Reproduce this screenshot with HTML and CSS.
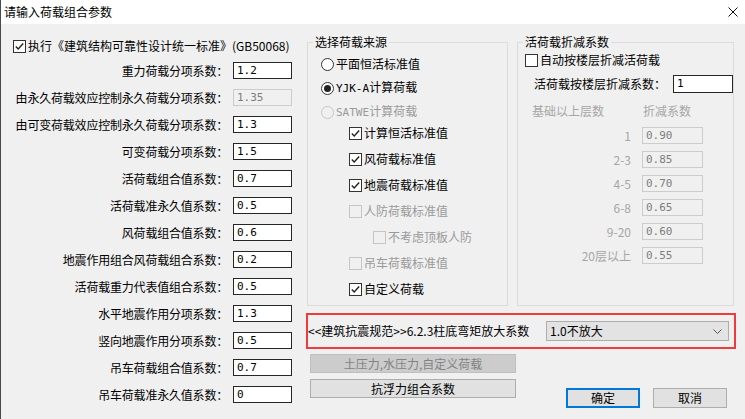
FILE: index.html
```html
<!DOCTYPE html>
<html lang="zh-CN">
<head>
<meta charset="utf-8">
<title>请输入荷载组合参数</title>
<link rel="stylesheet" href="styles.css">
</head>
<body>
<div class="window">
  <div class="titlebar">
    <span class="title">请输入荷载组合参数</span>
    <svg class="close" viewBox="0 0 10 10"><path d="M0.5 0.5 L9.5 9.5 M9.5 0.5 L0.5 9.5" stroke="#111" stroke-width="1" fill="none"/></svg>
  </div>
  <div class="main">
    <div class="left">
      <div class="row topchk">
        <span class="cb"><svg viewBox="0 0 11 11"><path d="M1.8 5.6 L4.2 8 L9.2 2.6" /></svg></span>
        <span>执行《建筑结构可靠性设计统一标准》(GB50068)</span>
      </div>
      <div class="params">
        <span class="lbl">重力荷载分项系数：</span><span class="inp">1.2</span>
        <span class="lbl">由永久荷载效应控制永久荷载分项系数：</span><span class="inp dis">1.35</span>
        <span class="lbl">由可变荷载效应控制永久荷载分项系数：</span><span class="inp">1.3</span>
        <span class="lbl">可变荷载分项系数：</span><span class="inp">1.5</span>
        <span class="lbl">活荷载组合值系数：</span><span class="inp">0.7</span>
        <span class="lbl">活荷载准永久值系数：</span><span class="inp">0.5</span>
        <span class="lbl">风荷载组合值系数：</span><span class="inp">0.6</span>
        <span class="lbl">地震作用组合风荷载组合系数：</span><span class="inp">0.2</span>
        <span class="lbl">活荷载重力代表值组合系数：</span><span class="inp">0.5</span>
        <span class="lbl">水平地震作用分项系数：</span><span class="inp">1.3</span>
        <span class="lbl">竖向地震作用分项系数：</span><span class="inp">0.5</span>
        <span class="lbl">吊车荷载组合值系数：</span><span class="inp">0.7</span>
        <span class="lbl">吊车荷载准永久值系数：</span><span class="inp">0</span>
      </div>
    </div>
    <div class="right">
      <div class="groups">
        <fieldset class="grp grp-src">
          <legend>选择荷载来源</legend>
          <div class="radios">
            <div class="row rrow"><span class="rad"></span><span>平面恒活标准值</span></div>
            <div class="row rrow"><span class="rad on"></span><span><span class="mono">YJK-A</span>计算荷载</span></div>
            <div class="row rrow disabled"><span class="rad"></span><span><span class="mono">SATWE</span>计算荷载</span></div>
          </div>
          <div class="checks">
            <div class="row crow"><span class="cb"><svg viewBox="0 0 11 11"><path d="M1.8 5.6 L4.2 8 L9.2 2.6" /></svg></span><span>计算恒活标准值</span></div>
            <div class="row crow"><span class="cb"><svg viewBox="0 0 11 11"><path d="M1.8 5.6 L4.2 8 L9.2 2.6" /></svg></span><span>风荷载标准值</span></div>
            <div class="row crow"><span class="cb"><svg viewBox="0 0 11 11"><path d="M1.8 5.6 L4.2 8 L9.2 2.6" /></svg></span><span>地震荷载标准值</span></div>
            <div class="row crow disabled"><span class="cb"></span><span>人防荷载标准值</span></div>
            <div class="row crow sub disabled"><span class="cb"></span><span>不考虑顶板人防</span></div>
            <div class="row crow disabled"><span class="cb"></span><span>吊车荷载标准值</span></div>
            <div class="row crow"><span class="cb"><svg viewBox="0 0 11 11"><path d="M1.8 5.6 L4.2 8 L9.2 2.6" /></svg></span><span>自定义荷载</span></div>
          </div>
        </fieldset>
        <fieldset class="grp grp-red">
          <legend>活荷载折减系数</legend>
          <div class="row autochk"><span class="cb"></span><span>自动按楼层折减活荷载</span></div>
          <div class="row floorrow"><span>活荷载按楼层折减系数：</span><span class="inp tall">1</span></div>
          <div class="redtable">
            <span class="th th1">基础以上层数</span><span class="th th2">折减系数</span>
            <span class="rl">1</span><span class="inp dis">0.90</span>
            <span class="rl">2-3</span><span class="inp dis">0.85</span>
            <span class="rl">4-5</span><span class="inp dis">0.70</span>
            <span class="rl">6-8</span><span class="inp dis">0.65</span>
            <span class="rl">9-20</span><span class="inp dis">0.60</span>
            <span class="rl">20层以上</span><span class="inp dis">0.55</span>
          </div>
        </fieldset>
      </div>
      <div class="redbox">
        <span class="rb-text">&lt;&lt;建筑抗震规范&gt;&gt;6.2.3柱底弯矩放大系数</span>
        <div class="select">
          <span>1.0不放大</span>
          <svg class="chev" viewBox="0 0 9 5"><path d="M0.5 0.5 L4.5 4.5 L8.5 0.5" /></svg>
        </div>
      </div>
      <div class="actions">
        <div class="btncol">
          <div class="btn btn-dis">土压力,水压力,自定义荷载</div>
          <div class="btn">抗浮力组合系数</div>
        </div>
        <div class="okcancel">
          <div class="btn btn-ok">确定</div>
          <div class="btn btn-sm">取消</div>
        </div>
      </div>
    </div>
  </div>
</div>
</body>
</html>
```
FILE: styles.css
```css
html, body {
  margin: 0;
  padding: 0;
}
body {
  width: 745px;
  height: 419px;
  overflow: hidden;
  background: #f0f0f0;
  font-family: "Noto Sans CJK SC", "Noto Sans", sans-serif;
  font-size: 12px;
  color: #000;
}
.window {
  height: 419px;
  border-left: 1px solid #4a4a4a;
  display: flex;
  flex-direction: column;
}
.titlebar {
  height: 24px;
  flex: none;
  background: #fff;
  display: flex;
  align-items: center;
  justify-content: space-between;
  padding: 0 7px 0 3px;
}
.title {
  line-height: 16px;
}
.close {
  width: 10px;
  height: 10px;
}
.main {
  flex: 1;
  display: flex;
}
.left {
  width: 305px;
  flex: none;
}
.row {
  display: flex;
  align-items: center;
  gap: 2px;
  white-space: nowrap;
  line-height: 16px;
}
.topchk {
  height: 20px;
  margin: 12px 0 1px 12px;
}
.cb {
  width: 13px;
  height: 13px;
  box-sizing: border-box;
  border: 1px solid #333;
  background: #fff;
  flex: none;
  display: flex;
}
.cb svg {
  width: 11px;
  height: 11px;
  fill: none;
  stroke: #222;
  stroke-width: 1.4;
}
.rad {
  width: 13px;
  height: 13px;
  box-sizing: border-box;
  border: 1px solid #333;
  border-radius: 50%;
  background: #fff;
  flex: none;
  display: flex;
  align-items: center;
  justify-content: center;
}
.rad.on::after {
  content: "";
  width: 7px;
  height: 7px;
  border-radius: 50%;
  background: #222;
}
.disabled {
  color: #9a9a9a;
}
.disabled .cb,
.disabled .rad {
  border-color: #c6c6c6;
  background: #f0f0f0;
}
.mono {
  font-family: "DejaVu Sans Mono", monospace;
  font-size: 11px;
}
.params {
  display: grid;
  grid-template-columns: 227px 59px;
  column-gap: 5px;
  grid-auto-rows: 27px;
  align-items: center;
}
.lbl {
  text-align: right;
  line-height: 16px;
  white-space: nowrap;
  letter-spacing: -0.2px;
}
.inp {
  height: 17px;
  box-sizing: border-box;
  border: 1px solid #262626;
  background: #fff;
  font-family: "DejaVu Sans Mono", monospace;
  font-size: 11px;
  line-height: 15px;
  padding-left: 3px;
  white-space: nowrap;
}
.inp.dis {
  border-color: #cccccc;
  background: #f0f0f0;
  color: #7d7d7d;
}
.inp.tall {
  height: 18px;
  line-height: 16px;
  width: 60px;
  flex: none;
}
.right {
  flex: 1;
  padding-top: 10px;
  display: flex;
  flex-direction: column;
}
.groups {
  display: flex;
}
.grp {
  margin: 0;
  padding: 0;
  border: 1px solid #dcdcdc;
  box-sizing: border-box;
  height: 272px;
  min-width: 0;
}
.grp legend {
  margin-left: 5px;
  padding: 0 2px;
  line-height: 16px;
  font-size: 12px;
}
.grp-src {
  width: 201px;
  margin-left: 1px;
}
.grp-red {
  width: 217px;
  margin-left: 9px;
}
.radios {
  padding: 2px 0 0 13px;
}
.rrow {
  height: 24px;
}
.checks {
  margin-top: -4px;
  padding-left: 41px;
}
.crow {
  height: 26px;
}
.crow.sub {
  padding-left: 24px;
}
.autochk {
  height: 20px;
  padding-left: 7px;
}
.floorrow {
  height: 20px;
  margin-top: 4px;
  padding-left: 16px;
  padding-right: 0;
  justify-content: space-between;
}
.redtable {
  margin-top: 8px;
  display: grid;
  grid-template-columns: 113px 61px;
  column-gap: 11px;
  grid-template-rows: 18px;
  grid-auto-rows: 17px;
  row-gap: 7px;
  align-items: center;
  color: #a6a6a6;
}
.th {
  line-height: 16px;
  white-space: nowrap;
}
.th1 {
  padding-left: 14px;
}
.th2 {
  padding-left: 1px;
}
.rl {
  text-align: right;
  line-height: 16px;
  white-space: nowrap;
}
.redbox {
  margin-top: 7px;
  width: 430px;
  height: 36px;
  box-sizing: border-box;
  border: 2px solid #ef3b3b;
  display: flex;
  align-items: center;
  justify-content: space-between;
  padding-right: 5px;
}
.rb-text {
  line-height: 16px;
  white-space: nowrap;
}
.select {
  width: 183px;
  height: 20px;
  box-sizing: border-box;
  border: 1px solid #adadad;
  background: #e3e3e3;
  display: flex;
  align-items: center;
  justify-content: space-between;
  padding: 0 6px 0 3px;
  line-height: 16px;
}
.chev {
  width: 9px;
  height: 5px;
  fill: none;
  stroke: #555;
  stroke-width: 1;
}
.actions {
  display: flex;
}
.btncol {
  margin: 5px 0 0 4px;
  width: 206px;
  display: flex;
  flex-direction: column;
  gap: 6px;
}
.btn {
  height: 19px;
  box-sizing: border-box;
  border: 1px solid #adadad;
  background: #e1e1e1;
  display: flex;
  align-items: center;
  justify-content: center;
  line-height: 16px;
  white-space: nowrap;
}
.btn-dis {
  background: #cccccc;
  border-color: #bfbfbf;
  color: #838383;
}
.okcancel {
  margin: 39px 0 0 50px;
  display: flex;
  gap: 13px;
}
.btn-sm,
.btn-ok {
  width: 74px;
  height: 20px;
}
.btn-ok {
  border: 2px solid #0078d7;
}
```
